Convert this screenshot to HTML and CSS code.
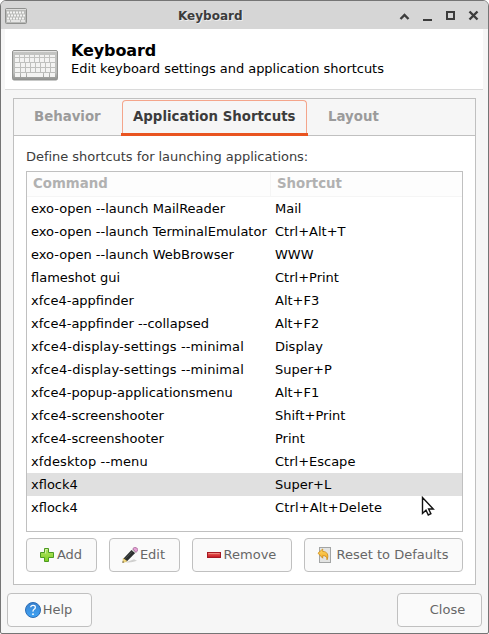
FILE: index.html
```html
<!DOCTYPE html>
<html lang="en">
<head>
<meta charset="utf-8">
<title>Keyboard</title>
<link rel="stylesheet" href="styles.css">
</head>
<body>
<svg class="defs" width="0" height="0">
  <defs>
    <linearGradient id="kb" x1="0" y1="0" x2="0" y2="1"><stop offset="0" stop-color="#c4c5c3"/><stop offset=".75" stop-color="#bcbdbb"/><stop offset="1" stop-color="#8f908e"/></linearGradient>
    <linearGradient id="green" x1="0" y1="0" x2="0" y2="1"><stop offset="0" stop-color="#b5e36b"/><stop offset="1" stop-color="#7fd01f"/></linearGradient>
    <linearGradient id="red" x1="0" y1="0" x2="0" y2="1"><stop offset="0" stop-color="#ef6a5c"/><stop offset="1" stop-color="#c4111f"/></linearGradient>
    <linearGradient id="blue" x1="0" y1="0" x2="0" y2="1"><stop offset="0" stop-color="#3a82cf"/><stop offset="1" stop-color="#3fa4f5"/></linearGradient>
    <linearGradient id="gold" x1="0" y1="0" x2="0" y2="1"><stop offset="0" stop-color="#ffd966"/><stop offset="1" stop-color="#f2a51c"/></linearGradient>
  </defs>
</svg>
<div class="window">
  <div class="titlebar">
    <svg class="app-icon" width="22" height="16" viewBox="0 0 22 16">
      <rect x=".5" y=".5" width="21" height="15" rx="1" fill="#b9bab8" stroke="#8f908e"/>
      <path d="M1 1.500h20" stroke="#dededd"/>
      <path d="M2 4.500h18M3 7.500h17M2 10.500h18" stroke="#f3f3f2" stroke-width="2" stroke-dasharray="2 1"/>
      <path d="M2 13h3M6 13h9M16 13h4" stroke="#f3f3f2" stroke-width="1.500"/>
    </svg>
    <span class="title">Keyboard</span>
    <svg class="controls" width="82" height="14" viewBox="0 0 82 14" fill="none" stroke="#3c3c3c">
      <path d="M1.500 9L5.500 5L9.500 9" stroke-width="2.400"/>
      <path d="M24 10h9" stroke-width="2"/>
      <rect x="48" y="2" width="7" height="7" stroke-width="2"/>
      <path d="M70.500 1.500l8 8M78.500 1.500l-8 8" stroke-width="2.400"/>
    </svg>
  </div>
  <div class="header">
    <svg class="keyboard" width="46" height="31" viewBox="0 0 46 31">
      <rect x=".5" y=".5" width="45" height="29.500" rx="1.500" fill="url(#kb)" stroke="#929391"/>
      <path d="M1.500 1.500h43" stroke="#e5e5e4"/>
      <g stroke="#f3f3f2" fill="none" stroke-width="4">
        <path d="M3 6h4M8 6h4M13 6h4M18 6h4M23 6h4M28 6h4M33 6h4M38 6h5" stroke-width="2"/>
        <path d="M3 10h4M8 10h4M13 10h4M18 10h4M23 10h4M28 10h4M33 10h4M38 10h5"/>
        <path d="M3 15h5M9 15h4M14 15h4M19 15h4M24 15h4M29 15h4M34 15h4M39 15h4"/>
        <path d="M3 20h5M9 20h4M14 20h4M19 20h4M24 20h4M29 20h4M34 20h4M39 20h4"/>
        <path d="M3 25h5M9 25h5M15 25h16M32 25h5M38 25h5"/>
      </g>
    </svg>
    <div class="heading">
      <h1>Keyboard</h1>
      <p>Edit keyboard settings and application shortcuts</p>
    </div>
  </div>
  <div class="notebook">
    <div class="tabs">
      <div class="tab behavior">Behavior</div>
      <div class="tab active"><span>Application Shortcuts</span></div>
      <div class="tab layout">Layout</div>
    </div>
    <div class="page">
      <div class="label">Define shortcuts for launching applications:</div>
      <div class="table">
        <div class="thead"><div>Command</div><div>Shortcut</div></div>
        <div class="row"><div>exo-open --launch MailReader</div><div>Mail</div></div>
        <div class="row"><div>exo-open --launch TerminalEmulator</div><div>Ctrl+Alt+T</div></div>
        <div class="row"><div>exo-open --launch WebBrowser</div><div>WWW</div></div>
        <div class="row"><div>flameshot gui</div><div>Ctrl+Print</div></div>
        <div class="row"><div>xfce4-appfinder</div><div>Alt+F3</div></div>
        <div class="row"><div>xfce4-appfinder --collapsed</div><div>Alt+F2</div></div>
        <div class="row"><div class="loose">xfce4-display-settings --minimal</div><div>Display</div></div>
        <div class="row"><div class="loose">xfce4-display-settings --minimal</div><div>Super+P</div></div>
        <div class="row"><div>xfce4-popup-applicationsmenu</div><div>Alt+F1</div></div>
        <div class="row"><div>xfce4-screenshooter</div><div>Shift+Print</div></div>
        <div class="row"><div>xfce4-screenshooter</div><div>Print</div></div>
        <div class="row"><div class="loose">xfdesktop --menu</div><div>Ctrl+Escape</div></div>
        <div class="row selected"><div>xflock4</div><div>Super+L</div></div>
        <div class="row"><div>xflock4</div><div class="loose">Ctrl+Alt+Delete</div></div>
      </div>
      <div class="actions">
        <div class="button add"><svg width="16" height="16" viewBox="0 0 16 16"><path d="M5.500 1.500h4v4h5v5h-5v4h-4v-4h-4v-5h4z" fill="url(#green)" stroke="#4c9a22"/><path d="M6.500 6.500v-4h2" fill="none" stroke="#d3f0a4"/></svg><span>Add</span></div>
        <div class="button edit"><svg width="16" height="16" viewBox="0 0 16 16"><path d="M4 15.200q5 .8 11-1.500l-3-1.500z" fill="#d0d0cf"/><path d="M1.300 11.800L9.500 3l3.700 3L5 14.200z" fill="#2c302f"/><path d="M2.800 12.300L11 3.800" stroke="#484c4a"/><path d="M1.300 11.300l3.700 2.900-4.200 1.500z" fill="#f6dc84" stroke="#c5a64b" stroke-width=".5"/><path d="M.7 14.200l1.300.9-1.500.7z" fill="#222"/><path d="M9.800 3l1-1 3.500 3-1 1z" fill="#c9cbc8"/><path d="M10.800 1.800Q12-.5 14.500.8T15 4.300l-1 1.100z" fill="#e4a1d5" stroke="#9b5b8d" stroke-width=".7"/></svg><span>Edit</span></div>
        <div class="button remove"><svg width="16" height="16" viewBox="0 0 16 16"><rect x="1.500" y="5.500" width="13" height="5" fill="url(#red)" stroke="#a51a24"/><path d="M2.500 6.500h11" stroke="#f08a80"/></svg><span>Remove</span></div>
        <div class="button reset"><svg width="16" height="16" viewBox="0 0 16 16"><rect x="2.500" y=".5" width="11" height="15" fill="#e3e4e3" stroke="#a3a5a5"/><path d="M1 6.200L5.700 2v2.500c4.500-.2 6.300 3.500 4.300 8.300.2-3-1.200-4.200-4.300-4.100v2.500z" fill="url(#gold)" stroke="#cf8a10" stroke-width=".8"/></svg><span>Reset to Defaults</span></div>
      </div>
    </div>
  </div>
  <div class="footer">
    <div class="button help"><svg width="16" height="16" viewBox="0 0 16 16"><circle cx="8" cy="8" r="7.500" fill="url(#blue)" stroke="#2b6cb5"/><path d="M5.700 5.300Q5.900 3.300 8.100 3.300T10.300 5.400Q10.300 6.600 9.100 7.300T8 9.600" fill="none" stroke="#fff" stroke-width="1.300"/><circle cx="8" cy="12.200" r=".9" fill="#fff"/></svg><span>Help</span></div>
    <div class="button close"><span>Close</span></div>
  </div>
  <svg class="cursor" width="15" height="22" viewBox="0 0 15 22"><path d="M1.500 1.500v16l3.500-3.300 2.300 4.800 2.600-1.300-2.300-4.700h4.700z" fill="#fff" stroke="#111" stroke-width="1.400"/></svg>
</div>
</body>
</html>
```
FILE: styles.css
```css
* { box-sizing: border-box; }
body { margin: 0; background: #fff; font: 13px/16px "DejaVu Sans", sans-serif; color: #000; }
.defs { position: absolute; }
svg { display: block; flex: none; }
.window { position: relative; width: 489px; height: 634px; background: #f6f6f6; border: 1px solid #757575; border-radius: 6px 6px 2px 2px; overflow: hidden; white-space: nowrap; }
.titlebar { display: flex; align-items: center; height: 28px; background: #d6d6d6; padding: 1px 4px 0; }
.app-icon { margin-top: 1px; }
.title { width: 65px; margin-left: 151px; font-size: 12px; font-weight: bold; color: #3c3c3c; text-shadow: 1px 1px 0 #ececec; }
.controls { margin-left: 156px; margin-top: 2px; }
.header { display: flex; height: 61px; margin: 0 5px 0 4px; padding: 13px 0 0 7px; background: #fff; border-bottom: 1px solid #dadada; }
.keyboard { margin-top: 8px; }
.heading { margin-left: 13px; }
h1 { margin: 0; font-size: 16px; line-height: 17px; letter-spacing: -0.1px; }
p { margin: 0; padding-top: 2px; letter-spacing: -0.04px; }
.notebook { margin: 8px 12px 0; height: 487px; border: 1px solid #c0c0c0; background: #fff; }
.tabs { display: flex; height: 37px; background: #f6f6f6; border-bottom: 1px solid #c0c0c0; font-size: 13.333px; font-weight: bold; color: #9b9b9b; }
.tab { padding-top: 10px; }
.behavior { width: 107px; padding-left: 20px; }
.tab.active { width: 187px; height: 37px; padding: 1px 1px 0; border-bottom: 3px solid #e95420; color: #3c3c3c; }
.active span { display: block; height: 33px; padding: 8px 10px; border: 1px solid #f4a58b; border-bottom: 0; border-radius: 4px 4px 0 0; }
.layout { padding-left: 20px; }
.page { padding: 13px 12px 0; }
.label { color: #3c3c3c; height: 22px; letter-spacing: -0.04px; }
.table { height: 361px; border: 1px solid #c0c0c0; }
.thead { display: grid; grid-template-columns: 244px 1fr; height: 25px; background: #fdfdfd; border-bottom: 1px solid #f5f5f5; font-size: 13.333px; font-weight: bold; color: #b1b1b1; line-height: 24px; }
.thead div { padding-left: 6px; }
.thead div:first-child { border-right: 1px solid #f5f5f5; }
.row { display: grid; grid-template-columns: 244px 1fr; height: 23px; line-height: 23px; }
.row div { padding-left: 4px; }
.row .loose { letter-spacing: 0.13px; }
.selected { background: #e0e0e0; }
.actions { display: flex; gap: 12px; margin-top: 6px; }
.button { display: flex; align-items: center; justify-content: center; height: 34px; padding-right: 2px; border: 1px solid #c0c0c0; border-radius: 4px; background: #fafafa; color: #676767; }
.button svg + span { margin-left: 2px; }
.add, .edit { width: 71px; }
.remove { width: 100px; }
.reset { width: 159px; }
.reset svg + span { margin-left: 4px; }
.footer { display: flex; justify-content: space-between; padding: 8px 6px 0; }
.help, .close { width: 85px; }
.close { padding-left: 18px; }
.cursor { position: absolute; left: 420px; top: 495px; }
```
